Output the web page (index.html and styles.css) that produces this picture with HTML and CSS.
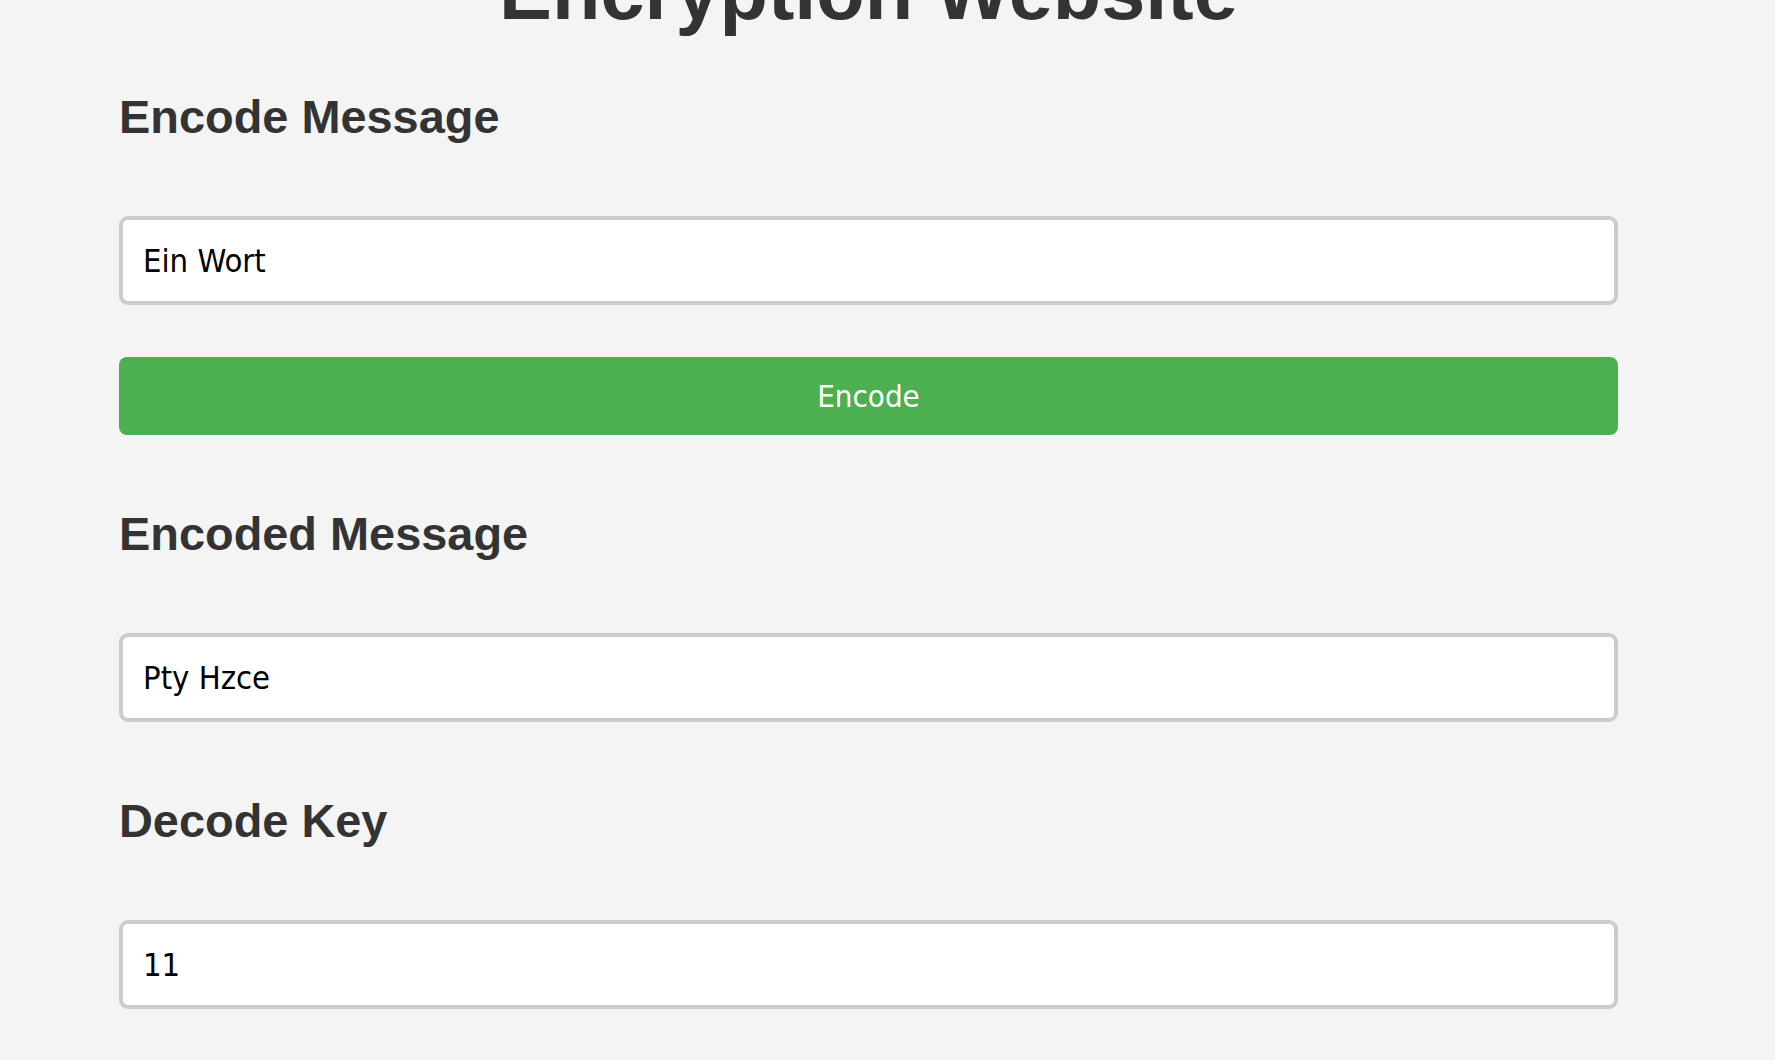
FILE: index.html
```html
<!DOCTYPE html>
<html lang="en">
<head>
<meta charset="utf-8">
<title>Encryption Website</title>
<link rel="stylesheet" href="styles.css">
</head>
<body>
<main class="page">
  <h1 class="title">Encryption Website</h1>

  <h2 class="heading">Encode Message</h2>
  <input class="field field-before-button" type="text" value="Ein Wort">
  <button class="btn" type="button">Encode</button>

  <h2 class="heading">Encoded Message</h2>
  <input class="field" type="text" value="Pty Hzce">

  <h2 class="heading">Decode Key</h2>
  <input class="field" type="text" value="11">
</main>
</body>
</html>
```

FILE: styles.css
```css
html, body {
  margin: 0;
  padding: 0;
  background: #f4f4f4;
  overflow: hidden;
}

body {
  font-family: "Liberation Sans", Arial, sans-serif;
  color: #333;
}

.page {
  display: flex;
  flex-direction: column;
  width: 1499px;
  margin-left: 119px;
}

.title {
  margin: -53px 0 53px;
  font-size: 79.3px;
  line-height: 90px;
  height: 90px;
  font-weight: bold;
  text-align: center;
  color: #333;
}

.heading {
  margin: 0 0 72px;
  font-size: 46.9px;
  line-height: 54px;
  height: 54px;
  font-weight: bold;
  color: #333;
}

.field {
  box-sizing: border-box;
  width: 100%;
  height: 89px;
  margin: 0 0 72px;
  padding: 0 20px;
  border: 4px solid #ccc;
  border-radius: 9px;
  background: #fff;
  font-family: "DejaVu Sans", sans-serif;
  font-stretch: condensed;
  font-size: 32.5px;
  color: #000;
  outline: none;
}

.field-before-button {
  margin-bottom: 52px;
}

.btn {
  box-sizing: border-box;
  width: 100%;
  height: 78px;
  margin: 0 0 72px;
  padding: 0;
  border: none;
  border-radius: 8px;
  background: #4caf50;
  color: #fff;
  font-family: "DejaVu Sans", sans-serif;
  font-stretch: condensed;
  font-size: 31px;
  cursor: pointer;
}
```
